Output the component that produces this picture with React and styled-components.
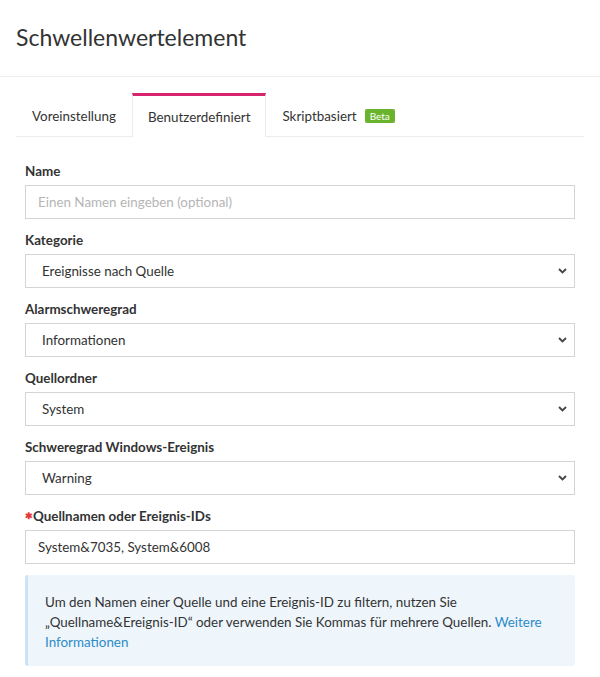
import React from "react";
import { styled, createGlobalStyle } from "styled-components";

const Global = createGlobalStyle`
  body {
    margin: 0;
    background: #fff;
    font-family: "Lato", "Liberation Sans", sans-serif;
    color: #333;
  }
`;

const Header = styled.header`
  height: 77px;
  box-sizing: border-box;
  padding: 22px 16px 0;
  border-bottom: 1px solid #ececec;
  h1 {
    margin: 0;
    font-size: 23px;
    font-weight: 400;
    line-height: 30px;
    color: #333;
  }
`;

const Tabs = styled.nav`
  display: flex;
  align-items: flex-end;
  margin: 15px 16px 0;
  border-bottom: 1px solid #ececec;
`;

const Tab = styled.div`
  display: flex;
  align-items: center;
  gap: 8px;
  height: 44px;
  box-sizing: border-box;
  padding: 1px 15px 0;
  font-size: 13.4px;
  color: #333;
  border-top: 3px solid ${(p) => (p.$active ? "#d8246c" : "transparent")};
  border-left: 1px solid ${(p) => (p.$active ? "#ececec" : "transparent")};
  border-right: 1px solid ${(p) => (p.$active ? "#ececec" : "transparent")};
  margin-bottom: ${(p) => (p.$active ? "-1px" : "0")};
  background: ${(p) => (p.$active ? "#fff" : "transparent")};
`;

const Badge = styled.span`
  background: #6ab42d;
  color: #fff;
  font-size: 10px;
  line-height: 14px;
  padding: 0 5px;
  border-radius: 2px;
`;

const Form = styled.form`
  padding: 25px 25px 0;
`;

const Group = styled.div`
  margin-bottom: 12px;
`;

const Label = styled.label`
  display: block;
  font-size: 13.4px;
  font-weight: 700;
  line-height: 18px;
  margin-bottom: 5px;
  color: #333;
  &::before {
    content: ${(p) => (p.$required ? '"\\2731"' : "none")};
    color: #e53935;
    font-size: 9px;
    vertical-align: 2px;
  }
`;

const Input = styled.input`
  display: block;
  width: 100%;
  box-sizing: border-box;
  height: 34px;
  border: 1px solid #d4d4d4;
  padding: 0 12px;
  font-family: inherit;
  font-size: 13.4px;
  color: #333;
  outline: none;
  &::placeholder {
    color: #b5b5b5;
  }
`;

const SelectWrap = styled.div`
  position: relative;
  svg {
    position: absolute;
    right: 8px;
    top: 14px;
    pointer-events: none;
  }
`;

const Select = styled.select`
  display: block;
  width: 100%;
  box-sizing: border-box;
  height: 34px;
  border: 1px solid #d4d4d4;
  border-radius: 0;
  background: #fff;
  appearance: none;
  padding: 0 16px;
  font-family: inherit;
  font-size: 13.4px;
  color: #333;
`;

const Info = styled.div`
  margin-top: -1px;
  background: #eef6fc;
  border-left: 3px solid #cde2f3;
  border-radius: 3px;
  padding: 17px 20px 14px 17px;
  font-size: 13.4px;
  line-height: 20px;
  color: #333;
  a {
    color: #2d8bc7;
    text-decoration: none;
  }
`;

const Chevron = () => (
  <svg width="9" height="6" viewBox="0 0 9 6">
    <path d="M1 1 L4.5 4.5 L8 1" fill="none" stroke="#444" strokeWidth="1.8" />
  </svg>
);

const Field = ({ label, value, required }) => (
  <Group>
    <Label $required={required}>{label}</Label>
    <SelectWrap>
      <Select defaultValue={value}>
        <option>{value}</option>
      </Select>
      <Chevron />
    </SelectWrap>
  </Group>
);

export default function App() {
  return (
    <>
      <Global />
      <Header>
        <h1>Schwellenwertelement</h1>
      </Header>
      <Tabs>
        <Tab>Voreinstellung</Tab>
        <Tab $active>Benutzerdefiniert</Tab>
        <Tab>
          Skriptbasiert <Badge>Beta</Badge>
        </Tab>
      </Tabs>
      <Form>
        <Group>
          <Label>Name</Label>
          <Input placeholder="Einen Namen eingeben (optional)" />
        </Group>
        <Field label="Kategorie" value="Ereignisse nach Quelle" />
        <Field label="Alarmschweregrad" value="Informationen" />
        <Field label="Quellordner" value="System" />
        <Field label="Schweregrad Windows-Ereignis" value="Warning" />
        <Group>
          <Label $required>Quellnamen oder Ereignis-IDs</Label>
          <Input defaultValue="System&7035, System&6008" />
        </Group>
        <Info>
          Um den Namen einer Quelle und eine Ereignis-ID zu filtern, nutzen Sie
          „Quellname&Ereignis-ID“ oder verwenden Sie Kommas für mehrere Quellen.{" "}
          <a href="#">Weitere Informationen</a>
        </Info>
      </Form>
    </>
  );
}
